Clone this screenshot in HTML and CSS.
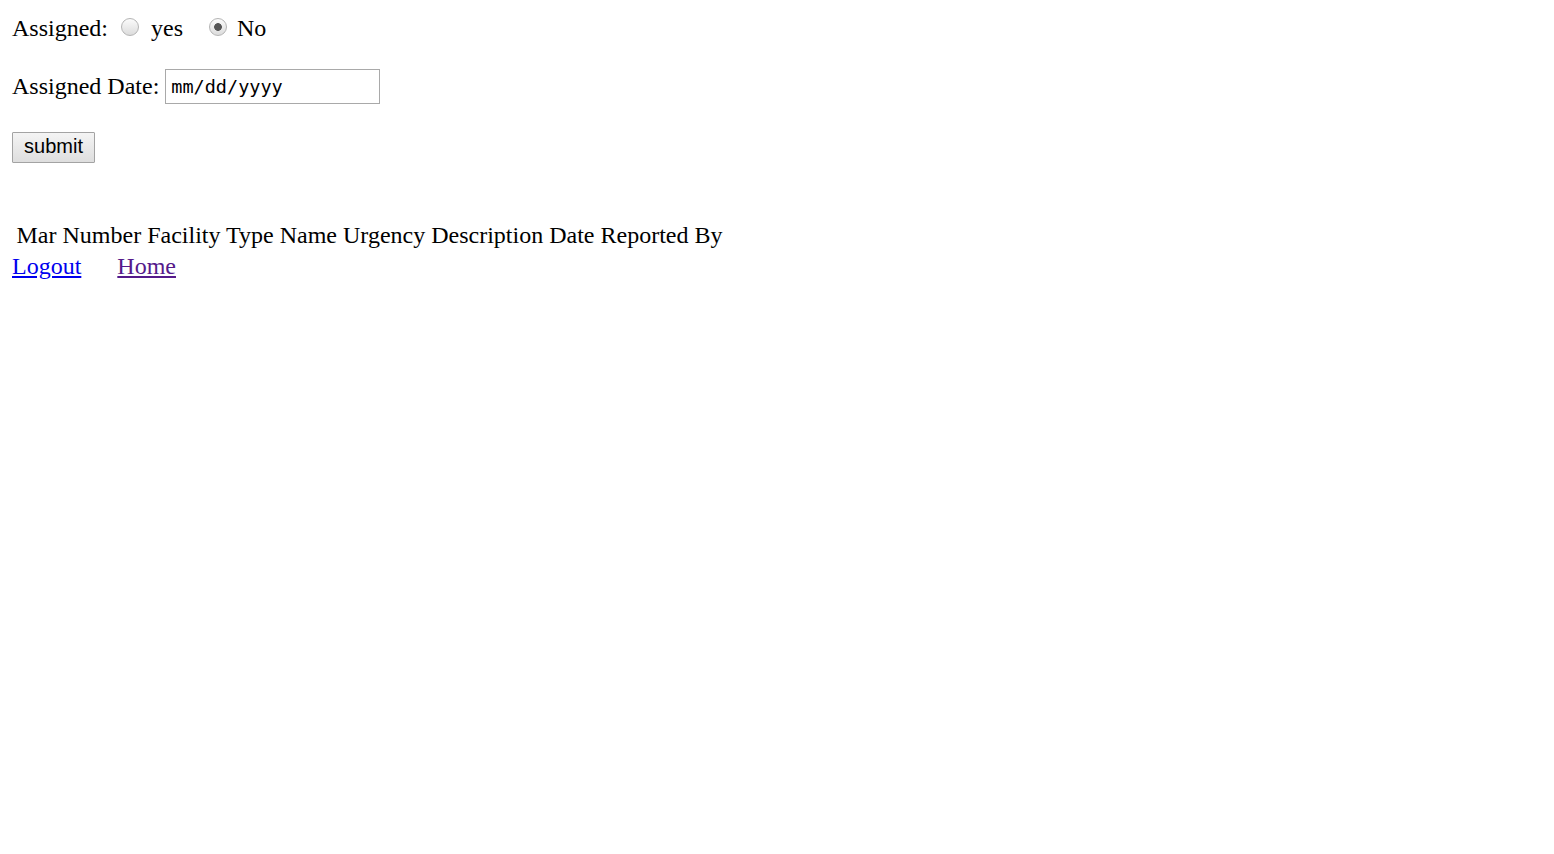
FILE: index.html
```html
<!DOCTYPE html>
<html>
<head>
<meta charset="utf-8">
<title>Assign</title>
<link rel="stylesheet" href="styles.css">
</head>
<body>
<form class="form">
  <div class="row row-assigned">
    <span class="label">Assigned:</span>
    <input class="radio radio-yes" type="radio" name="assigned" id="yes">
    <label class="opt opt-yes" for="yes">yes</label>
    <input class="radio radio-no" type="radio" name="assigned" id="no" checked>
    <label class="opt" for="no">No</label>
  </div>
  <div class="row row-date">
    <span class="label">Assigned Date:</span>
    <input class="date" type="text" placeholder="mm/dd/yyyy">
  </div>
  <div class="row row-submit">
    <button class="submit" type="button">submit</button>
  </div>
</form>
<table class="list">
  <tr>
    <td>Mar Number</td>
    <td>Facility Type</td>
    <td>Name</td>
    <td>Urgency</td>
    <td>Description</td>
    <td>Date Reported</td>
    <td>By</td>
  </tr>
</table>
<div class="links">
  <a class="link link-logout" href="#">Logout</a>
  <a class="link link-home" href="#">Home</a>
</div>
</body>
</html>
```
FILE: styles.css
```css
html, body {
  background: #fff;
}
body {
  margin: 12px;
  font-family: "Liberation Serif", "Times New Roman", serif;
  font-size: 24px;
  line-height: 28px;
  color: #000;
}
.form {
  margin: 0;
}
.row {
  display: flex;
  align-items: center;
}
.row-assigned {
  height: 28px;
  padding-top: 2px;
}
.radio {
  -webkit-appearance: none;
  appearance: none;
  width: 18px;
  height: 18px;
  margin: 0;
  border: 1px solid #b4b4b4;
  border-radius: 50%;
  background: linear-gradient(#fbfbfb, #dcdcdc);
  box-sizing: border-box;
  position: relative;
  top: -1px;
  display: inline-block;
}
.radio:checked {
  background: radial-gradient(circle, #555 0, #555 3.5px, transparent 4.2px), linear-gradient(#fbfbfb, #dcdcdc);
}
.radio-yes {
  margin-left: 13px;
  margin-right: 12px;
}
.radio-no {
  margin-left: 26px;
  margin-right: 10px;
}
.row-date {
  margin-top: 27px;
  align-items: baseline;
}
.row-date .label {
  position: relative;
  top: 1px;
}
.date {
  margin-left: 6px;
  width: 215px;
  height: 35px;
  box-sizing: border-box;
  border: 1px solid #a9a9a9;
  padding: 0 5px;
  font-family: "DejaVu Sans Mono", "Liberation Mono", monospace;
  font-size: 18.5px;
  color: #000;
  outline: none;
}
.date::placeholder {
  color: #000;
  opacity: 1;
}
.row-submit {
  margin-top: 28px;
}
.submit {
  width: 83px;
  height: 31px;
  box-sizing: border-box;
  border: 1px solid #a3a3a3;
  border-radius: 1px;
  background: linear-gradient(#f4f4f4, #dedede);
  font-family: "Liberation Sans", Arial, sans-serif;
  font-size: 20px;
  color: #000;
  padding: 0 0 2px;
  margin: 0;
}
.list {
  margin-top: 53px;
  border-spacing: 3px;
  border-collapse: separate;
}
.list td {
  padding: 1.5px;
  line-height: 28px;
}
.links {
  display: flex;
  margin-top: -1px;
}
.link {
  color: #0000ee;
  text-decoration: underline;
}
.link-home {
  margin-left: 36px;
  color: #551a8b;
}
```
